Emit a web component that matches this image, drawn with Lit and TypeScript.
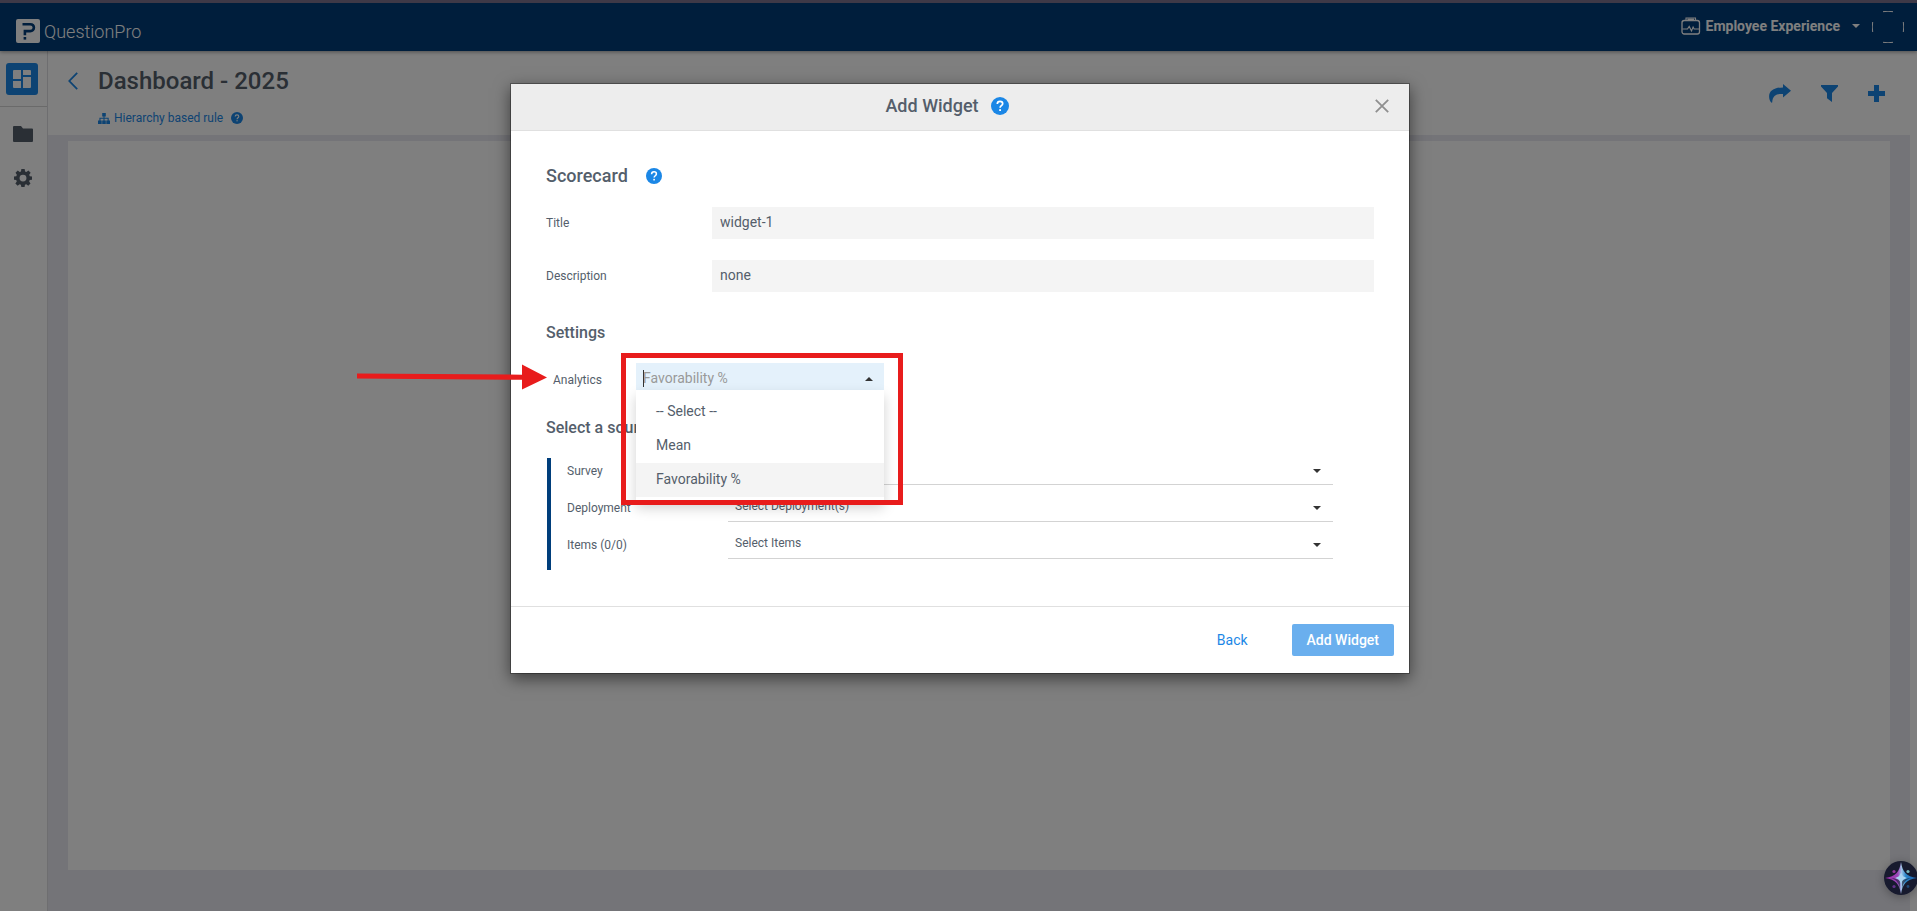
import { LitElement, html, css, svg } from "lit";
import { customElement, property, state } from "lit/decorators.js";

const ICONS: Record<string, { box: string; body: unknown }> = {
  help: {
    box: "0 0 18 18",
    body: svg`<circle cx="9" cy="9" r="9" fill="currentColor"/><path d="M6.3 6.9C6.3 5.3 7.4 4.3 9 4.3s2.7 1 2.7 2.4c0 1.9-2.6 2.1-2.6 4" fill="none" stroke="#fff" stroke-width="1.7"/><rect x="8.2" y="12.2" width="1.8" height="1.8" fill="#fff"/>`,
  },
  logo: {
    box: "0 0 24 24",
    body: svg`<rect width="24" height="24" rx="2" fill="#fff"/><path d="M6.500 5.200h7.700c2.500 0 3.700 1.300 3.700 3.400s-1.300 3.500-3.700 3.500H8.900v4.200" fill="none" stroke="#003c7a" stroke-width="2.6"/><rect x="7.6" y="18" width="2.6" height="2.6" fill="#003c7a"/>`,
  },
  product: {
    box: "0 0 20 18",
    body: svg`<rect x="1" y="3.500" width="17.500" height="13.500" rx="2.200" fill="none" stroke="currentColor" stroke-width="1.300"/><path d="M5 3.300V1h9.500v2.300M6.500 2.400h6.500M1.500 12h5l1.700-2.600 2.300 4.600 1.600-4 1 2h4.900" fill="none" stroke="currentColor" stroke-width="1.100"/>`,
  },
  caret: { box: "0 0 8 4", body: svg`<path d="M0 0h8L4 4z" fill="currentColor"/>` },
  caretUp: { box: "0 0 8 4", body: svg`<path d="M0 4h8L4 0z" fill="currentColor"/>` },
  avatar: {
    box: "0 0 32 32",
    body: svg`<path d="M11 .7Q16-.2 21 .7M11 31.3q5 .9 10 0M.7 11q-.9 5 0 10M31.3 11q.9 5 0 10" fill="none" stroke="currentColor"/>`,
  },
  grid: {
    box: "0 0 18 18",
    body: svg`<path d="M1 0h7v9H0V1a1 1 0 0 1 1-1zM10 0h7a1 1 0 0 1 1 1v4h-8zM0 11h8v7H1a1 1 0 0 1-1-1zM10 7h8v10a1 1 0 0 1-1 1h-7z" fill="currentColor"/>`,
  },
  folder: {
    box: "0 0 20 16",
    body: svg`<path d="M1 0h7l2 2.6h9a1 1 0 0 1 1 1V15a1 1 0 0 1-1 1H1a1 1 0 0 1-1-1V1a1 1 0 0 1 1-1z" fill="currentColor"/>`,
  },
  gear: {
    box: "0 0 24 24",
    body: svg`<path fill-rule="evenodd" fill="currentColor" d="M9.800 0h4.400l.6 3.200 1.700.7L19.200 2.100l3 3-1.900 2.600.7 1.800 3 .5v4.200l-3.100.6-.7 1.700 1.800 2.700-3 3-2.700-1.800-1.700.7-.5 2.900H9.800l-.6-3-1.700-.7-2.600 1.900-3.100-3 1.900-2.700-.7-1.700-3-.6V10l3.100-.5.7-1.800L2 5.100l3-3 2.600 1.800 1.700-.7zM12 7.500a4.600 4.600 0 1 0 0 9.200 4.600 4.600 0 0 0 0-9.200z"/>`,
  },
  back: { box: "0 0 10 18", body: svg`<path d="M9.200.8L1.300 9l7.900 8.200" fill="none" stroke="currentColor" stroke-width="1.800"/>` },
  tree: {
    box: "0 0 12 11",
    body: svg`<path fill="currentColor" d="M4.200 0h3.600v3.500H6.500v1.300h4.200v2.700H12V11H8.300V7.500h1.300V5.800H6.500v1.700h1.300V11H4.200V7.500h1.300V5.800h-3v1.700h1.200V11H0V7.500h1.400V4.800h4.100V3.500H4.200z"/>`,
  },
  share: {
    box: "0 0 22 19",
    body: svg`<path fill="currentColor" d="M14 0l8 6.800-8 6.700v-3.600C8 9.700 3.600 10.800 3.200 18.500l-.7.300C.8 17.200 0 14.800.1 12 .3 6.500 5.500 3.500 14 3.400z"/>`,
  },
  filter: { box: "0 0 17 17", body: svg`<path fill="currentColor" d="M0 0h17v1.500L11 8v9l-5-3.800V8L0 1.500z"/>` },
  plus: { box: "0 0 17 17", body: svg`<path fill="currentColor" d="M6 0h5v6h6v5h-6v6H6v-6H0V6h6z"/>` },
  close: { box: "0 0 14 14", body: svg`<path d="M.8.8l12.400 12.400M13.200.8L.8 13.200" stroke="currentColor" stroke-width="1.800"/>` },
  spark: {
    box: "0 0 34 34",
    body: svg`<defs><linearGradient id="s" x1="0" y1="0" x2="1" y2="0"><stop offset="0" stop-color="#a02cab"/><stop offset=".4" stop-color="#9a45b8"/><stop offset=".52" stop-color="#9fc4e6"/><stop offset=".65" stop-color="#2a86c8"/><stop offset="1" stop-color="#1c5fae"/></linearGradient></defs><circle cx="17" cy="17" r="17" fill="#171a2e"/><path d="M17 1c1.400 9.500 5 14.500 16 16-11 1.500-14.600 6.500-16 16C15.600 23.500 12 18.500 1 17 12 15.500 15.600 10.500 17 1z" fill="url(#s)"/><path d="M16 20c-2.500-2-5-2.600-10-3 6 1.200 9 4.500 10 11zM18 20c2.500-2 5-2.600 10-3-6 1.200-9 4.500-10 11z" fill="#171a2e" opacity=".6"/><path d="M17 11.500l2 3.700 3.800 1.800-3.800 1.800-2 3.700-2-3.700-3.800-1.800 3.800-1.800z" fill="#a9d4f0"/><circle cx="10" cy="10.500" r="1.600" fill="#93359c"/><circle cx="24" cy="10.500" r="1.600" fill="#77b5b8"/><circle cx="10" cy="25.500" r="1.600" fill="#63308a"/><circle cx="24" cy="25.500" r="1.400" fill="#1f4877"/>`,
  },
};

@customElement("ui-icon")
class UiIcon extends LitElement {
  @property() name = "help";
  static styles = css`
    :host { display: inline-flex; flex: none; }
    svg { width: 100%; height: 100%; display: block; }
  `;
  render() {
    const icon = ICONS[this.name];
    return html`<svg viewBox=${icon.box} aria-hidden="true">${icon.body}</svg>`;
  }
}

@customElement("add-widget-dialog")
class AddWidgetDialog extends LitElement {
  @state() private selected = "Favorability %";
  private options = ["-- Select --", "Mean", "Favorability %"];
  private sources = [
    { id: "survey", label: "Survey", value: "Select Survey" },
    { id: "deployment", label: "Deployment", value: "Select Deployment(s)" },
    { id: "items", label: "Items (0/0)", value: "Select Items" },
  ];

  static styles = css`
    :host {
      display: block;
      width: 900px;
      max-width: 100%;
      box-sizing: border-box;
      border: 1px solid rgba(0, 0, 0, 0.3);
      background: #fff;
      background-clip: padding-box;
      box-shadow: 0 5px 15px rgba(0, 0, 0, 0.5);
      color: #545e6b;
      font-size: 12px;
    }
    * { box-sizing: border-box; }
    h2, h3, h4 { margin: 0; font-weight: 500; line-height: 24px; }
    h2, h3 { font-size: 18px; }
    h4 { font-size: 16px; }
    button { font: inherit; border: 0; background: none; padding: 0; cursor: pointer; }
    .head {
      display: grid;
      grid-template-columns: 1fr auto 1fr;
      align-items: center;
      height: 47px;
      padding: 0 20px 2px;
      background: #ededed;
      border-bottom: 1px solid #e0e0e0;
    }
    .heading { grid-column: 2; display: flex; align-items: center; gap: 12px; padding-right: 26px; }
    .help { color: #1b87e6; }
    .help-lg { width: 18px; height: 18px; }
    .help-md { width: 16px; height: 16px; }
    .close { justify-self: end; color: #8f8f8f; display: flex; }
    .close-icon { width: 14px; height: 14px; }
    .body { padding: 33px 35px 36px; }
    .section { display: flex; align-items: center; gap: 18px; margin-bottom: 19px; }
    .row { display: grid; grid-template-columns: 166px 1fr; align-items: center; }
    .row + .row { margin-top: 21px; }
    .text {
      height: 32px;
      width: 100%;
      border: 0;
      padding: 0 8px 2px;
      background: #f4f4f4;
      color: #545e6b;
      font: inherit;
      font-size: 14px;
      outline: 0;
    }
    .settings { margin: 29px 0 18px; }
    .analytics { display: grid; grid-template-columns: 83px 248px; align-items: center; padding-left: 7px; }
    .analytics-label { padding-top: 6px; }
    .combo { position: relative; height: 27px; display: flex; align-items: center; background: #e4f1fb; }
    .combo-input {
      flex: 1;
      min-width: 0;
      height: 27px;
      border: 0;
      outline: 0;
      background: none;
      padding: 2px 7px 0;
      font: inherit;
      font-size: 14px;
    }
    .combo-input::placeholder { color: #999; opacity: 1; }
    .caret { position: absolute; left: 7px; top: 7px; width: 1px; height: 17px; background: #333; }
    .arrow-up { width: 8px; height: 4px; color: #333; margin: 4px 11px 0 0; }
    .list {
      position: absolute;
      z-index: 2;
      top: 27px;
      left: 0;
      right: 0;
      margin: 0;
      padding: 5px 0;
      list-style: none;
      background: #fff;
      box-shadow: 0 6px 12px rgba(0, 0, 0, 0.18);
    }
    .option {
      width: 100%;
      height: 34px;
      padding: 0 20px 2px;
      text-align: left;
      font-size: 14px;
      color: #545e6b;
    }
    .option-on { background: #f4f4f4; }
    .frame {
      position: absolute;
      z-index: 3;
      left: -15px;
      right: -19px;
      top: -10px;
      height: 152px;
      border: 5px solid #e81c1c;
      pointer-events: none;
    }
    .pointer { position: absolute; z-index: 3; right: 337px; top: 1px; width: 190px; height: 26px; pointer-events: none; }
    .source-title { margin: 26px 0 18px; }
    .sources {
      display: grid;
      gap: 10px;
      margin: 0 41px 0 1px;
      padding: 0 0 11px 16px;
      border-left: 4px solid #003e7b;
    }
    .source { display: grid; grid-template-columns: 161px 1fr; }
    .source-label { line-height: 27px; }
    .select-wrap { position: relative; display: grid; }
    .select {
      appearance: none;
      height: 27px;
      width: 100%;
      border: 0;
      border-bottom: 1px solid #d3d3d3;
      border-radius: 0;
      outline: 0;
      background: none;
      padding: 0 7px 4px;
      color: #545e6b;
      font: inherit;
    }
    .arrow-down { position: absolute; right: 12px; top: 11px; width: 8px; height: 4px; color: #333; pointer-events: none; }
    .foot {
      display: flex;
      justify-content: flex-end;
      align-items: center;
      gap: 44px;
      padding: 17px 15px;
      border-top: 1px solid #e0e0e0;
      font-size: 14px;
    }
    .link { color: #1b87e6; }
    .foot .primary {
      height: 32px;
      padding: 0 15px;
      border-radius: 2px;
      background: #6aafee;
      color: #fff;
      font-weight: 500;
    }
  `;

  render() {
    return html`
      <div class="head">
        <div class="heading">
          <h2>Add Widget</h2>
          <ui-icon class="help help-lg" name="help"></ui-icon>
        </div>
        <button class="close" aria-label="Close"><ui-icon class="close-icon" name="close"></ui-icon></button>
      </div>
      <div class="body">
        <div class="section">
          <h3>Scorecard</h3>
          <ui-icon class="help help-md" name="help"></ui-icon>
        </div>
        <div class="row">
          <label for="title">Title</label>
          <input class="text" id="title" type="text" .value=${"widget-1"} />
        </div>
        <div class="row">
          <label for="description">Description</label>
          <input class="text" id="description" type="text" .value=${"none"} />
        </div>
        <h4 class="settings">Settings</h4>
        <div class="analytics">
          <label class="analytics-label" for="analytics">Analytics</label>
          <div class="combo">
            <input class="combo-input" id="analytics" type="text" role="combobox" aria-expanded="true"
              aria-controls="analytics-list" placeholder=${this.selected} />
            <span class="caret"></span>
            <ui-icon class="arrow-up" name="caretUp"></ui-icon>
            <ul class="list" id="analytics-list">
              ${this.options.map(
                (o) => html`<li><button class="option ${o === this.selected ? "option-on" : ""}"
                  @click=${() => (this.selected = o)}>${o}</button></li>`
              )}
            </ul>
            <div class="frame"></div>
            <svg class="pointer" viewBox="0 0 190 26" aria-hidden="true">
              <path d="M0 9.500l165 1.200V.5L190 13.500 165 25.500V15.800L0 14.500z" fill="#e81c1c" />
            </svg>
          </div>
        </div>
        <h4 class="source-title">Select a source</h4>
        <div class="sources">
          ${this.sources.map(
            (s) => html`<div class="source">
              <label class="source-label" for=${s.id}>${s.label}</label>
              <div class="select-wrap">
                <select class="select" id=${s.id}><option>${s.value}</option></select>
                <ui-icon class="arrow-down" name="caret"></ui-icon>
              </div>
            </div>`
          )}
        </div>
      </div>
      <div class="foot">
        <button class="link">Back</button>
        <button class="primary">Add Widget</button>
      </div>
    `;
  }
}

@customElement("app-root")
class AppRoot extends LitElement {
  static styles = css`
    :host {
      display: flex;
      flex-direction: column;
      height: 100vh;
      overflow: hidden;
      position: relative;
      background: #fff;
      color: #545e6b;
      font-family: Roboto, "Noto Sans", sans-serif;
      font-size: 12px;
    }
    * { box-sizing: border-box; }
    button { border: 0; background: none; padding: 0; font: inherit; color: inherit; display: flex; align-items: center; cursor: pointer; }
    .topbar {
      position: relative;
      display: flex;
      align-items: center;
      justify-content: space-between;
      height: 51px;
      padding: 0 13px 0 16px;
      border-top: 3px solid #7c738f;
      background: #003c78;
      color: #fff;
      box-shadow: 0 1px 4px rgba(0, 0, 0, 0.4);
    }
    .brand { display: flex; align-items: center; gap: 4px; padding-top: 8px; font-size: 18px; font-weight: 300; color: #fff; text-decoration: none; }
    .logo { width: 24px; height: 24px; }
    .account { display: flex; align-items: center; gap: 12px; }
    .product { font-size: 14px; font-weight: 700; gap: 5px; padding-bottom: 2px; }
    .product-icon { width: 20px; height: 18px; }
    .product-caret { width: 8px; height: 4px; margin-left: 7px; }
    .avatar { width: 32px; height: 32px; }
    .main { flex: 1; display: flex; min-height: 0; }
    .side {
      width: 48px;
      display: flex;
      flex-direction: column;
      align-items: center;
      border-right: 1px solid #dcdce0;
      color: #545e6b;
    }
    .side-top { align-self: stretch; height: 56px; padding: 12px 0 0 6px; border-bottom: 1px solid #d5d5d5; }
    .side-active { width: 32px; height: 32px; justify-content: center; border-radius: 3px; background: #1b87e6; color: #fff; }
    .grid { width: 18px; height: 18px; }
    .side-link { margin: 19px 2px 0 0; }
    .side-link + .side-link { margin-top: 27px; }
    .folder { width: 20px; height: 16px; }
    .gear { width: 18px; height: 18px; }
    .page { flex: 1; display: flex; flex-direction: column; min-width: 0; }
    .pagehead { display: flex; justify-content: space-between; height: 84px; padding: 14px 32px 0 20px; }
    .title-row { display: flex; align-items: center; gap: 20px; }
    .title { margin: 0; font-size: 24px; font-weight: 500; line-height: 32px; }
    .blue { color: #1b87e6; }
    .back { width: 10px; height: 18px; }
    .rule { display: flex; align-items: center; gap: 4px; padding: 14px 0 0 30px; line-height: 14px; }
    .rule-link { color: #1b87e6; text-decoration: none; margin-right: 4px; }
    .tree { width: 12px; height: 11px; }
    .help-sm { width: 12px; height: 12px; }
    .actions { display: flex; align-items: center; gap: 30px; height: 56px; }
    .share { width: 22px; height: 19px; }
    .filter { width: 17px; height: 17px; }
    .canvas { flex: 1; margin-right: 7px; padding: 6px 20px 41px; background: #e8e9f0; display: grid; }
    .board { background: #fff; }
    .overlay {
      position: absolute;
      inset: 0;
      display: flex;
      justify-content: center;
      align-items: flex-start;
      padding: 83px 0 0 3px;
      background: rgba(0, 0, 0, 0.5);
    }
    .assist { position: absolute; right: -1px; bottom: 16px; border-radius: 50%; box-shadow: 0 2px 10px rgba(0, 0, 0, 0.3); }
    .spark { width: 34px; height: 34px; }
  `;

  render() {
    return html`
      <header class="topbar">
        <a class="brand" href="#"><ui-icon class="logo" name="logo"></ui-icon>QuestionPro</a>
        <div class="account">
          <button class="product">
            <ui-icon class="product-icon" name="product"></ui-icon>Employee Experience
            <ui-icon class="product-caret" name="caret"></ui-icon>
          </button>
          <button aria-label="Account"><ui-icon class="avatar" name="avatar"></ui-icon></button>
        </div>
      </header>
      <div class="main">
        <nav class="side">
          <div class="side-top">
            <button class="side-active" aria-label="Dashboards"><ui-icon class="grid" name="grid"></ui-icon></button>
          </div>
          <button class="side-link" aria-label="Files"><ui-icon class="folder" name="folder"></ui-icon></button>
          <button class="side-link" aria-label="Settings"><ui-icon class="gear" name="gear"></ui-icon></button>
        </nav>
        <main class="page">
          <div class="pagehead">
            <div>
              <div class="title-row">
                <button class="blue" aria-label="Back"><ui-icon class="back" name="back"></ui-icon></button>
                <h1 class="title">Dashboard - 2025</h1>
              </div>
              <div class="rule blue">
                <ui-icon class="tree" name="tree"></ui-icon>
                <a class="rule-link" href="#">Hierarchy based rule</a>
                <ui-icon class="help-sm" name="help"></ui-icon>
              </div>
            </div>
            <div class="actions blue">
              <button aria-label="Share"><ui-icon class="share" name="share"></ui-icon></button>
              <button aria-label="Filter"><ui-icon class="filter" name="filter"></ui-icon></button>
              <button aria-label="Add"><ui-icon class="filter" name="plus"></ui-icon></button>
            </div>
          </div>
          <div class="canvas"><div class="board"></div></div>
        </main>
      </div>
      <div class="overlay">
        <add-widget-dialog role="dialog" aria-label="Add Widget"></add-widget-dialog>
      </div>
      <button class="assist" aria-label="Assistant"><ui-icon class="spark" name="spark"></ui-icon></button>
    `;
  }
}
